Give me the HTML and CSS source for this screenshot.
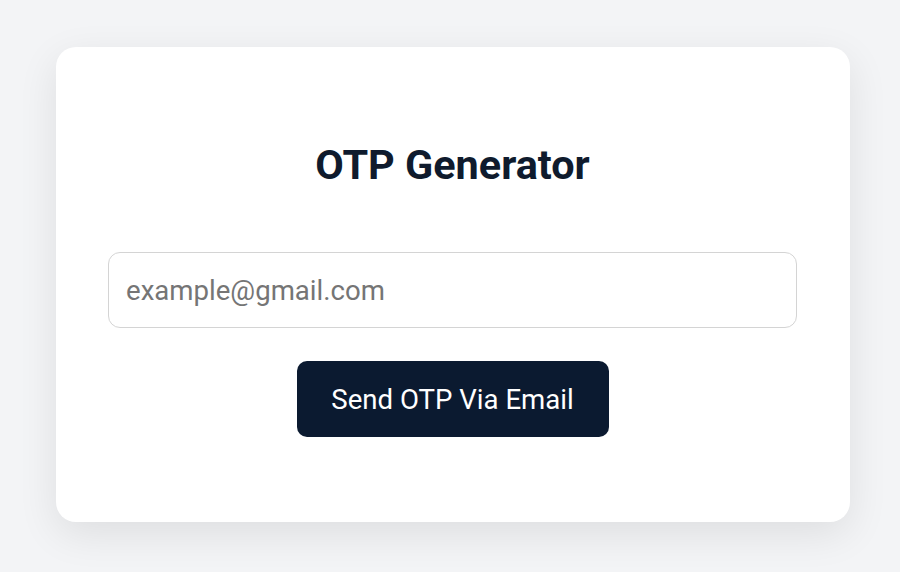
FILE: index.html
```html
<!DOCTYPE html>
<html lang="en">
<head>
<meta charset="utf-8">
<title>OTP Generator</title>
<link rel="stylesheet" href="styles.css">
</head>
<body>
<main class="page">
  <section class="card">
    <h1 class="title">OTP Generator</h1>
    <input class="email" type="email" placeholder="example@gmail.com">
    <button class="send" type="button">Send OTP Via Email</button>
  </section>
</main>
</body>
</html>
```

FILE: styles.css
```css
* { box-sizing: border-box; }
html, body {
  margin: 0;
  padding: 0;
  background: #f3f4f6;
  font-family: Roboto, "Liberation Sans", sans-serif;
}
.page {
  padding: 47px 50px 50px 56px;
}
.card {
  width: 794px;
  height: 475px;
  background: #ffffff;
  border-radius: 20px;
  box-shadow: 0 12px 40px rgba(0, 0, 0, 0.09);
  padding: 93px 53px 0 52px;
  display: flex;
  flex-direction: column;
  align-items: center;
}
.title {
  margin: 0;
  font-size: 41.4px;
  line-height: 50px;
  font-weight: 700;
  color: #0f1b2d;
}
.email {
  margin-top: 62px;
  width: 100%;
  height: 76px;
  border: 1.5px solid #d4d4d4;
  border-radius: 12px;
  padding: 0 17px;
  font-family: inherit;
  font-size: 27.6px;
  color: #333;
  outline: none;
}
.email::placeholder { color: #757575; }
.send {
  margin-top: 33px;
  width: 312px;
  height: 76px;
  border: none;
  border-radius: 10px;
  background: #0b1a30;
  color: #ffffff;
  font-family: inherit;
  font-size: 27.6px;
}
```
